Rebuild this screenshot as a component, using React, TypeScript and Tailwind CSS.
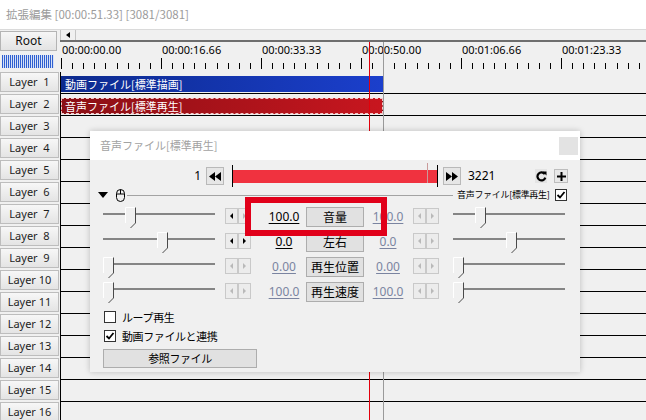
import React from "react";

const jp = "font-['Noto_Sans_CJK_JP',sans-serif]";
const ui = "font-['Noto_Sans','Noto_Sans_CJK_JP',sans-serif]";

const times = ["00:00:00.00", "00:00:16.66", "00:00:33.33", "00:00:50.00", "00:01:06.66", "00:01:23.33"];

const sliders = [
  { label: "音量", left: 22, right: 22, val: "100.0", rval: "100.0", on: true, la: [true, false] },
  { label: "左右", left: 54, right: 53, val: "0.0", rval: "0.0", on: true, la: [true, true] },
  { label: "再生位置", left: 0, right: 0, val: "0.00", rval: "0.00", on: false, la: [false, false] },
  { label: "再生速度", left: 0, right: 0, val: "100.0", rval: "100.0", on: false, la: [false, false] },
];

function Thumb({ left }: { left: number }) {
  return (
    <svg width="11" height="22" viewBox="0 0 11 22" className="absolute top-0" style={{ left }}>
      <polygon points="0.5,0.5 10.5,0.5 10.5,16 5.5,21 0.5,16" fill="#f0f0f0" />
      <polyline points="0.5,16 0.5,0.5 10.5,0.5" fill="none" stroke="#ffffff" />
      <polyline points="10.5,0.5 10.5,16 5.5,21" fill="none" stroke="#4a4a4a" />
    </svg>
  );
}

function Slider({ pos }: { pos: number }) {
  return (
    <div className="relative w-[112px] h-[22px] shrink-0 mt-[5px]">
      <div className="absolute left-0 right-0 top-[6px] h-[2px] bg-[#858585]" />
      <Thumb left={pos} />
    </div>
  );
}

function ArrowBtn({ dir, on }: { dir: "l" | "r"; on: boolean }) {
  return (
    <div className="w-[13px] h-[16px] border border-[#c9c9c9] bg-[#ececec] flex items-center justify-center">
      {dir === "l" ? (
        <div className={`w-0 h-0 border-y-[3px] border-y-transparent border-r-[3px] ${on ? "border-r-black" : "border-r-[#b9b9b9]"}`} />
      ) : (
        <div className={`w-0 h-0 border-y-[3px] border-y-transparent border-l-[3px] ${on ? "border-l-black" : "border-l-[#b9b9b9]"}`} />
      )}
    </div>
  );
}

function Arrows({ l, r }: { l: boolean; r: boolean }) {
  return (
    <div className="flex w-[26px] mt-[6px] shrink-0">
      <ArrowBtn dir="l" on={l} />
      <ArrowBtn dir="r" on={r} />
    </div>
  );
}

function CheckBox({ checked }: { checked: boolean }) {
  return (
    <div className="w-[12px] h-[12px] border border-[#333] bg-white flex items-center justify-center shrink-0">
      {checked && (
        <svg width="10" height="10" viewBox="0 0 10 10">
          <polyline points="1.5,5 4,7.5 8.5,2" fill="none" stroke="#000" strokeWidth="1.8" />
        </svg>
      )}
    </div>
  );
}

function Ticks() {
  const lines: React.ReactNode[] = [];
  for (let k = 0; k < 6; k++) {
    for (let j = 0; j < 9; j++) {
      const x = Math.round(1 + k * 100 + (j * 100) / 9) + 0.5;
      lines.push(<line key={`${k}-${j}`} x1={x} x2={x} y1={j === 0 ? 1 : 6} y2={12} stroke="#000" />);
    }
  }
  return (
    <svg width="586" height="15" className="block">
      {lines}
    </svg>
  );
}

export default function App() {
  return (
    <div className={`relative w-[646px] h-[420px] overflow-hidden bg-[#f0f0f0] ${ui}`}>
      {/* window title */}
      <div className={`h-[30px] bg-white border-b border-[#dadada] pl-[6px] flex items-center text-[11.5px] text-[#9b9b9b] ${jp}`}>
        拡張編集 [00:00:51.33] [3081/3081]
      </div>

      {/* header: root + ruler */}
      <div className="flex h-[42px]">
        <div className="w-[60px] shrink-0 flex flex-col">
          <div className="mt-[1px] h-[20px] w-[57px] border border-[#b4b4b4] bg-gradient-to-b from-[#f6f6f6] to-[#e3e3e3] flex items-center justify-center text-[12px] text-[#111]">
            Root
          </div>
          <div className="ml-[2px] mt-[4px] w-[52px] h-[13px] bg-[repeating-linear-gradient(90deg,#2f5fd0_0px,#2f5fd0_1px,#d6e1f6_1px,#d6e1f6_2px)]" />
        </div>
        <div className="flex-1 flex flex-col">
          <div className="h-[10px] flex border-l border-[#c4c4c4]">
            <div className="w-[15px] border-r border-[#c4c4c4] flex items-center justify-center">
              <div className="w-0 h-0 border-y-[3px] border-y-transparent border-r-[4px] border-r-black" />
            </div>
          </div>
          <div className="h-[2px] bg-[#6e6e6e]" />
          <div className="h-[30px] flex flex-col">
            <div className="h-[15px] flex pl-[2px] text-[11px] leading-[15px] text-black">
              {times.map((t) => (
                <span key={t} className="w-[100px] shrink-0">{t}</span>
              ))}
            </div>
            <Ticks />
          </div>
        </div>
      </div>

      {/* layers */}
      {Array.from({ length: 16 }, (_, i) => i + 1).map((n) => (
        <div key={n} className="flex h-[22px]">
          <div className="w-[60px] shrink-0">
            <div className="h-[20px] w-[59px] border border-[#bdbdbd] bg-gradient-to-b from-[#f7f7f7] to-[#e4e4e4] flex items-center justify-center text-[11px] text-[#1e1e1e] whitespace-pre">
              {n < 10 ? `Layer  ${n}` : `Layer ${n}`}
            </div>
          </div>
          <div className="relative flex-1 border-l border-b border-black">
            {n === 1 && (
              <div className={`absolute left-0 top-[4px] w-[322px] h-[16px] bg-gradient-to-r from-[#0c2a8e] to-[#1b3fcc] text-white text-[11px] leading-[16px] pl-[4px] ${jp}`}>
                動画ファイル[標準描画]
              </div>
            )}
            {n === 2 && (
              <div className={`absolute left-0 top-[4px] w-[322px] h-[16px] bg-gradient-to-r from-[#8a0f15] to-[#c8161f] border border-dashed border-[#f2c9c9] text-white text-[11px] leading-[14px] pl-[3px] ${jp}`}>
                音声ファイル[標準再生]
              </div>
            )}
          </div>
        </div>
      ))}

      {/* cursor lines */}
      <div className="absolute left-[369px] top-[42px] bottom-0 w-[1px] bg-[#e3000b]" />
      <div className="absolute left-[383px] top-[42px] bottom-0 w-[1px] bg-[#9a9a9a]" />

      {/* settings dialog */}
      <div className={`absolute left-[90px] top-[131px] w-[490px] h-[241px] bg-[#f0f0f0] shadow-[0_0_6px_rgba(0,0,0,0.22)] ${jp} text-[12px] text-black`}>
        <div className="h-[29px] bg-white flex items-center pl-[10px] text-[11px] text-[#a2a2a2]">
          音声ファイル[標準再生]
          <div className="ml-auto mr-[2px] w-[19px] h-[18px] bg-[#e3e3e3]" />
        </div>

        {/* frame bar */}
        <div className="flex items-center h-[20px] mt-[6px]">
          <div className={`w-[113px] text-right pr-[2px] ${ui}`}>1</div>
          <div className="ml-[3px] w-[18px] h-[18px] border border-[#b9b9b9] bg-[#e6e6e6] flex items-center justify-center">
            <svg width="12" height="9" viewBox="0 0 12 9">
              <polygon points="6,0 0,4.5 6,9" fill="#000" />
              <polygon points="12,0 6,4.5 12,9" fill="#000" />
            </svg>
          </div>
          <div className="ml-[8px] w-[206px] h-[22px] relative flex items-center">
            <div className="w-[1px] h-[22px] bg-black" />
            <div className="flex-1 h-[13px] bg-[#f0323f]" />
            <div className="w-[1px] h-[22px] bg-black" />
            <div className="absolute left-[195px] top-[-2px] w-[1px] h-[20px] bg-[#c99a9a]" />
          </div>
          <div className="ml-[5px] w-[18px] h-[18px] border border-[#b9b9b9] bg-[#e6e6e6] flex items-center justify-center">
            <svg width="12" height="9" viewBox="0 0 12 9">
              <polygon points="0,0 6,4.5 0,9" fill="#000" />
              <polygon points="6,0 12,4.5 6,9" fill="#000" />
            </svg>
          </div>
          <div className={`ml-[7px] ${ui}`}>3221</div>
          <div className="ml-auto w-[12px] h-[14px] bg-[#e4e4e4] flex items-center justify-center">
            <svg width="11" height="11" viewBox="0 0 11 11">
              <path d="M8.8 3.2 A4 4 0 1 0 9.3 6.6" fill="none" stroke="#000" strokeWidth="2.2" />
              <polygon points="6.5,0.5 10.5,0.5 10.5,4.5" fill="#000" />
            </svg>
          </div>
          <div className="ml-[7px] mr-[12px] w-[14px] h-[14px] border border-[#bdbdbd] bg-[#e8e8e8] flex items-center justify-center">
            <svg width="9" height="9" viewBox="0 0 9 9">
              <rect x="3.5" y="0" width="2" height="9" fill="#000" />
              <rect x="0" y="3.5" width="9" height="2" fill="#000" />
            </svg>
          </div>
        </div>

        {/* object header row */}
        <div className="flex items-center h-[14px] mt-[2px]">
          <div className="ml-[8px] w-0 h-0 border-x-[5px] border-x-transparent border-t-[6px] border-t-black" />
          <svg width="9" height="13" viewBox="0 0 9 13" className="ml-[8px]">
            <rect x="0.5" y="0.5" width="8" height="12" rx="4" fill="none" stroke="#000" />
            <line x1="4.5" y1="0.5" x2="4.5" y2="5" stroke="#000" />
            <line x1="0.5" y1="5" x2="8.5" y2="5" stroke="#000" />
          </svg>
          <div className="ml-[2px] w-[326px] h-[1px] bg-[#a3a3a3] shrink-0" />
          <div className="ml-[4px] text-[9px] leading-[14px] tracking-[-0.3px] whitespace-nowrap">音声ファイル[標準再生]</div>
          <div className="ml-auto mr-[13px]">
            <CheckBox checked />
          </div>
        </div>

        {/* sliders */}
        {sliders.map((s) => (
          <div key={s.label} className="flex items-start h-[25px]">
            <div className="ml-[13px]">
              <Slider pos={s.left} />
            </div>
            <div className="ml-[10px]">
              <Arrows l={s.la[0]} r={s.la[1]} />
            </div>
            <div className={`ml-[11px] w-[44px] mt-[5px] leading-[20px] text-center underline underline-offset-2 ${ui} ${s.on ? "text-black" : "text-[#7a84a0]"}`}>
              {s.val}
            </div>
            <div className="w-[58px] h-[20px] mt-[5px] border border-[#adadad] bg-[#e1e1e1] flex items-center justify-center">
              {s.label}
            </div>
            <div className={`ml-[2px] w-[44px] mt-[5px] leading-[20px] text-center underline underline-offset-2 text-[#7a84a0] ${ui}`}>
              {s.rval}
            </div>
            <div className="ml-[3px]">
              <Arrows l={false} r={false} />
            </div>
            <div className="ml-[14px]">
              <Slider pos={s.right} />
            </div>
          </div>
        ))}

        {/* options */}
        <div className="flex items-center h-[14px] mt-[8px] ml-[14px]">
          <CheckBox checked={false} />
          <span className="ml-[6px] text-[11px] tracking-[-0.4px]">ループ再生</span>
        </div>
        <div className="flex items-center h-[14px] mt-[5px] ml-[14px]">
          <CheckBox checked />
          <span className="ml-[6px] text-[11px] tracking-[-0.4px]">動画ファイルと連携</span>
        </div>
        <div className="ml-[13px] mt-[6px] w-[154px] h-[19px] border border-[#adadad] bg-[#e1e1e1] flex items-center justify-center text-[11px] tracking-[-0.4px]">
          参照ファイル
        </div>

        {/* highlight */}
        <div className="absolute left-[155px] top-[66px] w-[142px] h-[39px] border-[6px] border-[#e1001a]" />
      </div>
    </div>
  );
}
